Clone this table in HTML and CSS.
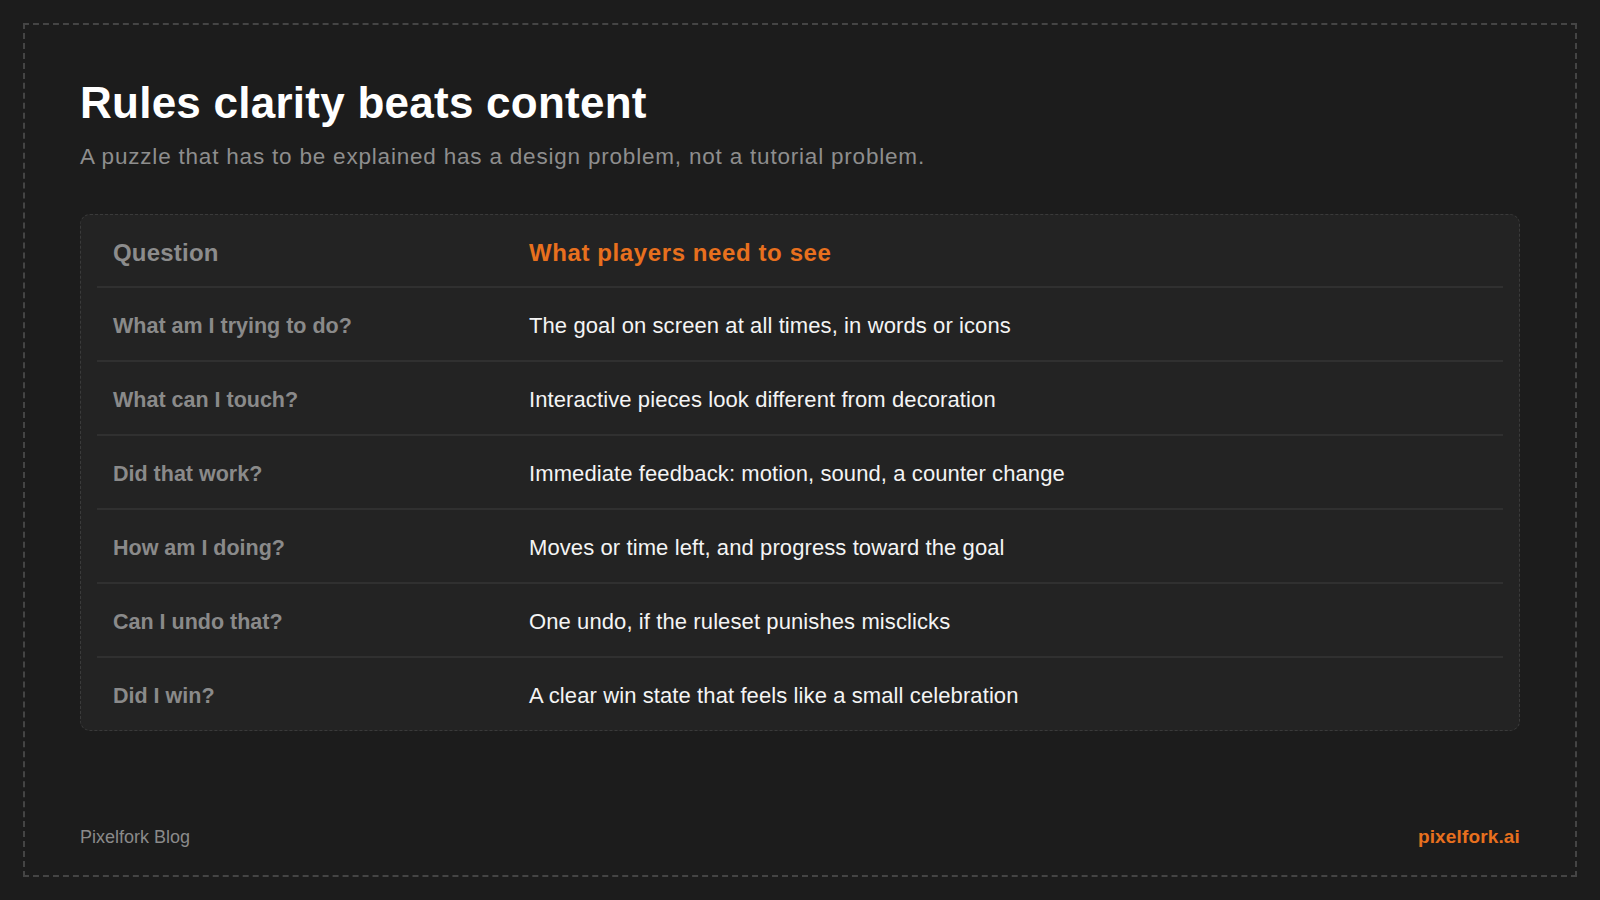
FILE: index.html
```html
<!DOCTYPE html>
<html lang="en">
<head>
<meta charset="utf-8">
<title>Rules clarity beats content</title>
<link rel="stylesheet" href="styles.css">
</head>
<body>
<div class="frame">
  <header class="intro">
    <h1 class="title">Rules clarity beats content</h1>
    <p class="subtitle">A puzzle that has to be explained has a design problem, not a tutorial problem.</p>
  </header>
  <section class="card">
    <div class="row head">
      <div class="cell q">Question</div>
      <div class="cell a accent">What players need to see</div>
    </div>
    <div class="row">
      <div class="cell q">What am I trying to do?</div>
      <div class="cell a">The goal on screen at all times, in words or icons</div>
    </div>
    <div class="row">
      <div class="cell q">What can I touch?</div>
      <div class="cell a">Interactive pieces look different from decoration</div>
    </div>
    <div class="row">
      <div class="cell q">Did that work?</div>
      <div class="cell a">Immediate feedback: motion, sound, a counter change</div>
    </div>
    <div class="row">
      <div class="cell q">How am I doing?</div>
      <div class="cell a">Moves or time left, and progress toward the goal</div>
    </div>
    <div class="row">
      <div class="cell q">Can I undo that?</div>
      <div class="cell a">One undo, if the ruleset punishes misclicks</div>
    </div>
    <div class="row">
      <div class="cell q">Did I win?</div>
      <div class="cell a">A clear win state that feels like a small celebration</div>
    </div>
  </section>
  <footer class="footer">
    <span class="brand">Pixelfork Blog</span>
    <span class="site">pixelfork.ai</span>
  </footer>
</div>
</body>
</html>
```
FILE: styles.css
```css
* { box-sizing: border-box; }
html, body {
  margin: 0;
  padding: 0;
  background: #1c1c1c;
}
body {
  font-family: "Liberation Sans", Arial, Helvetica, sans-serif;
  color: #f2f2f2;
  width: 1600px;
  height: 900px;
  padding: 23px;
}
.frame {
  height: 854px;
  border: 2px dashed #444444;
  padding: 51px 55px 27px;
  display: flex;
  flex-direction: column;
}
.title {
  margin: 0;
  font-size: 44px;
  line-height: 53px;
  font-weight: 700;
  color: #ffffff;
  letter-spacing: 0.25px;
}
.subtitle {
  margin: 12px 0 0;
  font-size: 22.5px;
  line-height: 31px;
  color: #8e8e8e;
  letter-spacing: 0.8px;
}
.card {
  margin-top: 42px;
  background: #232323;
  border: 1px dashed #3a3a3a;
  border-radius: 10px;
  padding: 0 16px;
}
.row {
  display: flex;
  align-items: center;
  height: 74px;
  border-bottom: 2px solid #303030;
}
.row:last-child { border-bottom: 0; height: 72px; }
.row.head { height: 73px; }
.cell { padding: 4px 16px 0; }
.q {
  width: 416px;
  flex: 0 0 416px;
  font-size: 21.5px;
  font-weight: 700;
  color: #8a8a8a;
}
.a {
  flex: 1;
  font-size: 22px;
  letter-spacing: 0.1px;
  color: #f4f4f4;
}
.head .q, .head .a {
  font-size: 24px;
  font-weight: 700;
  letter-spacing: 0.2px;
}
.head .a { letter-spacing: 0.6px; }
.head .q { color: #8c8c8c; }
.accent { color: #e8701e; }
.footer {
  margin-top: auto;
  display: flex;
  justify-content: space-between;
  align-items: baseline;
  font-size: 18px;
  line-height: 22px;
}
.brand { color: #8a8a8a; }
.site { color: #e8701e; font-weight: 700; font-size: 19px; letter-spacing: 0.15px; }
```
